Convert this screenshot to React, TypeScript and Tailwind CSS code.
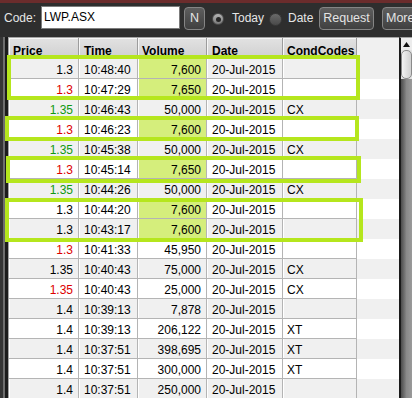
import React from "react";

type Row = {
  price: string;
  pc: "k" | "r" | "g";
  time: string;
  vol: string;
  hl: boolean;
  code: string;
};

const rows: Row[] = [
  { price: "1.3", pc: "k", time: "10:48:40", vol: "7,600", hl: true, code: "" },
  { price: "1.3", pc: "r", time: "10:47:29", vol: "7,650", hl: true, code: "" },
  { price: "1.35", pc: "g", time: "10:46:43", vol: "50,000", hl: false, code: "CX" },
  { price: "1.3", pc: "r", time: "10:46:23", vol: "7,600", hl: true, code: "" },
  { price: "1.35", pc: "g", time: "10:45:38", vol: "50,000", hl: false, code: "CX" },
  { price: "1.3", pc: "r", time: "10:45:14", vol: "7,650", hl: true, code: "" },
  { price: "1.35", pc: "g", time: "10:44:26", vol: "50,000", hl: false, code: "CX" },
  { price: "1.3", pc: "k", time: "10:44:20", vol: "7,600", hl: true, code: "" },
  { price: "1.3", pc: "k", time: "10:43:17", vol: "7,600", hl: true, code: "" },
  { price: "1.3", pc: "r", time: "10:41:33", vol: "45,950", hl: false, code: "" },
  { price: "1.35", pc: "k", time: "10:40:43", vol: "75,000", hl: false, code: "CX" },
  { price: "1.35", pc: "r", time: "10:40:43", vol: "25,000", hl: false, code: "CX" },
  { price: "1.4", pc: "k", time: "10:39:13", vol: "7,878", hl: false, code: "" },
  { price: "1.4", pc: "k", time: "10:39:13", vol: "206,122", hl: false, code: "XT" },
  { price: "1.4", pc: "k", time: "10:37:51", vol: "398,695", hl: false, code: "XT" },
  { price: "1.4", pc: "k", time: "10:37:51", vol: "300,000", hl: false, code: "XT" },
  { price: "1.4", pc: "k", time: "10:37:51", vol: "250,000", hl: false, code: "" },
];

const cellBase =
  "h-[20px] shrink-0 border-r border-b border-[#b4b4b4] shadow-[inset_1px_0_0_#ffffff] pt-[4px] leading-[15px] whitespace-nowrap overflow-hidden";

const headBase =
  "h-[21px] shrink-0 border-r border-b border-[#9c9c9c] bg-gradient-to-b from-[#e2e2e2] to-[#d0d0d0] shadow-[inset_1px_1px_0_#f6f6f6] pt-[6px] leading-[14px] font-bold text-black whitespace-nowrap overflow-hidden";

function Btn({ label, className }: { label: string; className: string }) {
  return (
    <div
      className={
        "h-[23px] shrink-0 rounded-[4px] border border-[#858585] bg-gradient-to-b from-[#5e5e5e] to-[#404040] text-[#e4e4e4] text-[12.5px] leading-[21px] flex justify-center " +
        className
      }
    >
      {label}
    </div>
  );
}

export default function App() {
  return (
    <div
      className="relative w-[412px] h-[398px] overflow-hidden bg-[#2e2e2e] text-[12px] text-black"
      style={{ fontFamily: '"Liberation Sans", Arial, sans-serif' }}
    >
      <div className="h-[3px] bg-[#6b2c2c]" />
      {/* toolbar */}
      <div className="h-[34px] flex items-center pb-[5px] pl-[4px] text-[#e6e6e6]">
        <div className="w-[37px] shrink-0 leading-[14px]">Code:</div>
        <div className="w-[139px] h-[23px] shrink-0 bg-white border border-[#7c7c7c] text-black leading-[21px] pl-[2px]">
          LWP.ASX
        </div>
        <Btn label="N" className="w-[21px] ml-[4px] mt-[2px]" />
        <div className="w-[12px] h-[12px] shrink-0 ml-[7px] mt-[3px] rounded-full border border-[#4a4a4a] bg-gradient-to-b from-[#b4b4b4] to-[#7a7a7a] flex items-center justify-center">
          <div className="w-[5px] h-[5px] rounded-full bg-[#262626]" />
        </div>
        <div className="w-[37px] shrink-0 ml-[8px] mt-[1px] leading-[14px] whitespace-nowrap">Today</div>
        <div className="w-[13px] h-[13px] shrink-0 mt-[3px] rounded-full border border-[#3a3a3a] bg-gradient-to-b from-[#6a6a6a] to-[#4a4a4a]" />
        <div className="w-[31px] shrink-0 ml-[6px] mt-[1px] leading-[14px] whitespace-nowrap">Date</div>
        <Btn label="Request" className="w-[55px] mt-[2px]" />
        <Btn label="More" className="w-[44px] ml-[8px] mt-[2px] justify-start pl-[3px]" />
      </div>

      {/* body */}
      <div className="flex h-[361px]">
        <div className="flex shrink-0">
          <div className="w-[3px] bg-[#353535]" />
          <div className="w-[2px] bg-[#6e6e6e]" />
          <div className="w-[3px] bg-[#1c1c1c]" />
        </div>
        <div className="w-[391px] shrink-0 bg-[#f0f0f0] border-l border-t border-[#a4a4a4] overflow-hidden">
          <div className="flex">
            <div className={headBase + " w-[70px] pl-[4px]"}>Price</div>
            <div className={headBase + " w-[59px] pl-[5px]"}>Time</div>
            <div className={headBase + " w-[69px] pl-[4px]"}>Volume</div>
            <div className={headBase + " w-[76px] pl-[5px]"}>Date</div>
            <div className={headBase + " w-[74px] pl-[4px]"}>CondCodes</div>
          </div>
          {rows.map((r, i) => {
            const bg = i % 2 === 0 ? "bg-[#f0f0f0]" : "bg-white";
            const pc =
              r.pc === "r" ? "text-[#dd0000]" : r.pc === "g" ? "text-[#119911]" : "text-black";
            return (
              <div key={i} className={"flex " + bg}>
                <div className={cellBase + " w-[70px] text-right pr-[5px] " + pc}>{r.price}</div>
                <div className={cellBase + " w-[59px] pl-[5px]"}>{r.time}</div>
                <div
                  className={
                    cellBase + " w-[69px] text-right pr-[5px] " + (r.hl ? "bg-[#d5ee7c]" : "")
                  }
                >
                  {r.vol}
                </div>
                <div className={cellBase + " w-[76px] pl-[5px]"}>20-Jul-2015</div>
                <div className={cellBase + " w-[74px] pl-[4px]"}>{r.code}</div>
              </div>
            );
          })}
        </div>
        {/* scrollbar */}
        <div className="w-[13px] shrink-0 flex flex-col border-l-2 border-[#1a1a1a] border-t border-t-[#a4a4a4]">
          <div className="h-[12px] bg-[#ececec] flex items-center justify-center">
            <svg width="7" height="5" viewBox="0 0 7 5">
              <path d="M3.5 0 L7 5 L0 5 Z" fill="#111" />
            </svg>
          </div>
          <div className="h-[29px] bg-[#e2e2e2] flex">
            <div className="flex-1 rounded-[5px] border border-[#8a8a8a] bg-gradient-to-r from-[#f2f2f2] to-[#d0d0d0]" />
          </div>
          <div className="flex-1 bg-gradient-to-r from-[#4c4c4c] via-[#8a8a8a] to-[#9a9a9a]" />
        </div>
      </div>

      {/* annotation boxes */}
      <div className="absolute left-[7px] top-[55px] w-[353px] h-[45px] border-4 border-[#b5e61d]" />
      <div className="absolute left-[5px] top-[116px] w-[354px] h-[25px] border-4 border-[#b5e61d]" />
      <div className="absolute left-[6px] top-[156px] w-[355px] h-[27px] border-4 border-[#b5e61d]" />
      <div className="absolute left-[5px] top-[198px] w-[358px] h-[44px] border-4 border-[#b5e61d]" />
    </div>
  );
}
